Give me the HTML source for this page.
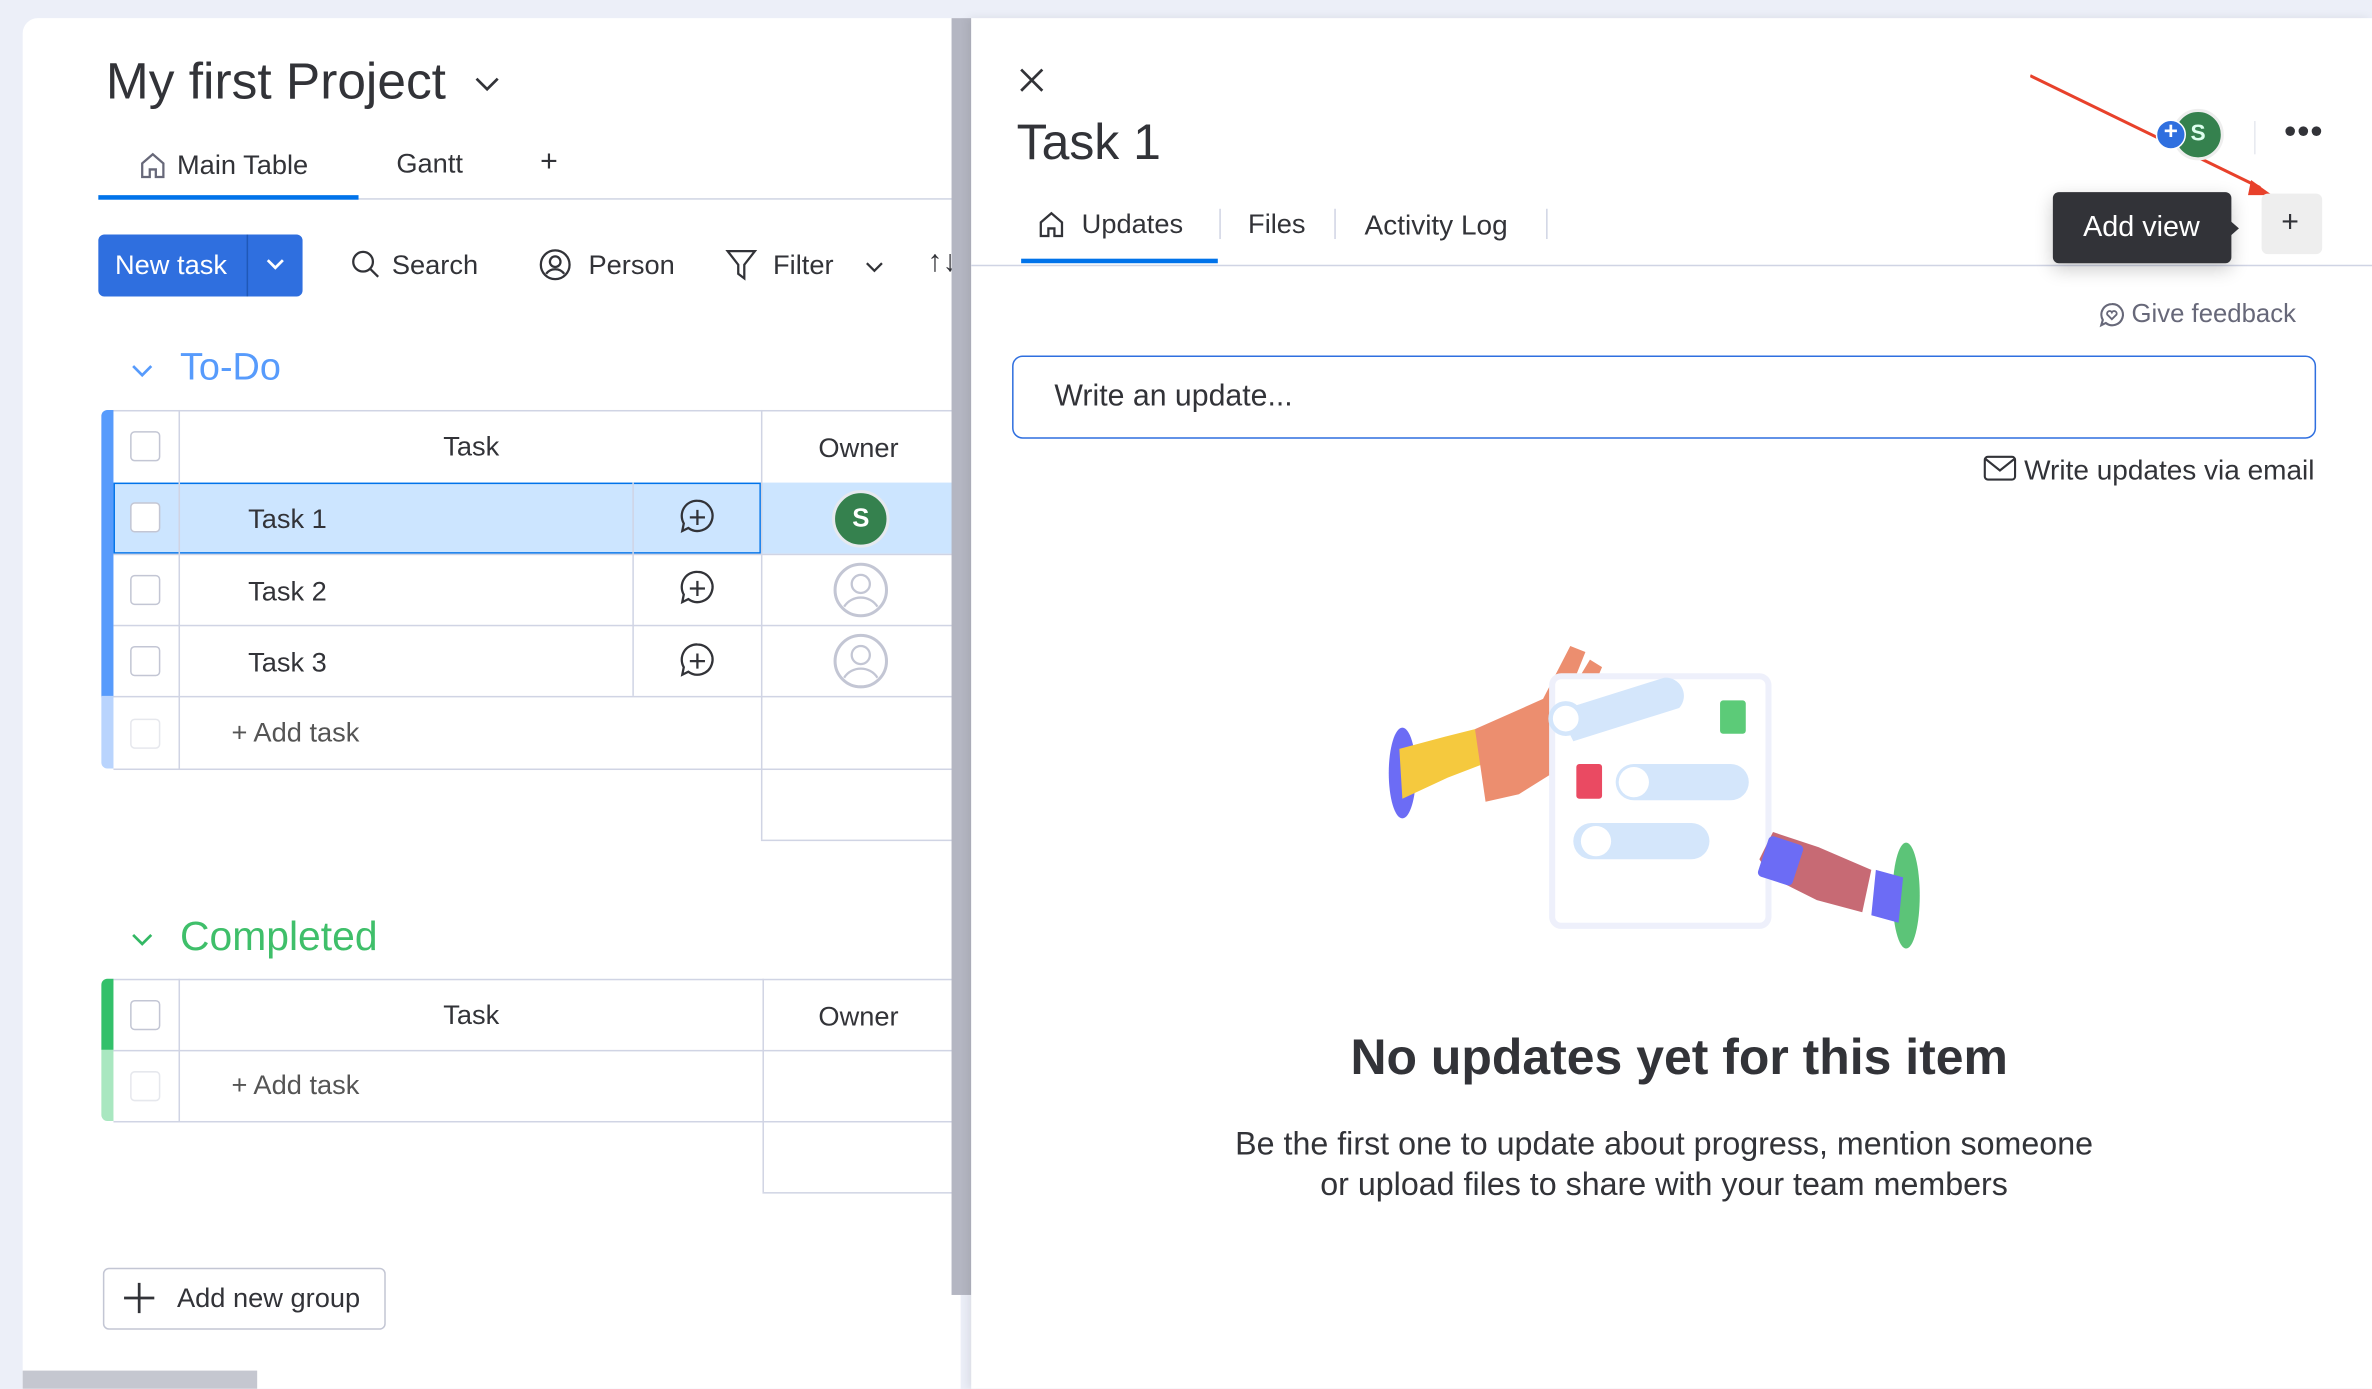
<!DOCTYPE html>
<html><head><meta charset="utf-8"><style>
*{box-sizing:border-box;margin:0;padding:0}
html,body{width:2372px;height:1388px;overflow:hidden;background:#eceff8}
#s{position:absolute;left:0;top:0;width:1568px;height:918px;transform:scale(1.5128);transform-origin:0 0;font-family:"Liberation Sans",sans-serif;color:#323338}
.a{position:absolute}
.t{position:absolute;white-space:nowrap}
.cb{position:absolute;width:20px;height:20px;border:1px solid #c3c6d4;border-radius:3px;background:#fff}
.hl{position:absolute;height:1px;background:#d0d4e4}
.vl{position:absolute;width:1px;background:#d0d4e4}
</style></head><body><div id="s">
<div class="a" style="left:15px;top:12px;width:620px;height:906px;background:#fff;border-radius:10px 0 0 0"></div>
<div class="a" style="left:15px;top:906px;width:155px;height:12px;background:#c5c7d0"></div>
<div class="t" style="left:70px;top:35px;font-size:34px;color:#323338">My first Project</div>
<svg class="a" style="left:313px;top:50px" width="18" height="12"><path d="M2 2l7 7 7-7" stroke="#323338" stroke-width="1.8" fill="none"/></svg>
<svg class="a" style="left:92px;top:100px" width="18" height="18"><path d="M2 8l7-6 7 6v9h-5v-5h-4v5H2z" stroke="#676879" stroke-width="1.5" fill="none"/></svg>
<div class="t" style="left:117px;top:99px;font-size:18px">Main Table</div>
<div class="t" style="left:262px;top:98px;font-size:18px">Gantt</div>
<div class="t" style="left:357px;top:96px;font-size:20px">+</div>
<div class="hl" style="left:65px;top:131px;width:565px;background:#d0d4e4"></div>
<div class="a" style="left:65px;top:129px;width:172px;height:3px;background:#0073ea"></div>
<div class="a" style="left:65px;top:155px;width:135px;height:41px;background:#2f6fdf;border-radius:4px"></div>
<div class="a" style="left:163px;top:155px;width:1px;height:41px;background:#1f58b8"></div>
<div class="t" style="left:76px;top:165px;font-size:18px;color:#fff">New task</div>
<svg class="a" style="left:175px;top:170px" width="14" height="10"><path d="M2 2l5 5 5-5" stroke="#fff" stroke-width="1.8" fill="none"/></svg>
<svg class="a" style="left:232px;top:165px" width="20" height="20"><circle cx="8" cy="8" r="6.5" stroke="#323338" stroke-width="1.5" fill="none"/><path d="M13 13l5 5" stroke="#323338" stroke-width="1.5"/></svg>
<div class="t" style="left:259px;top:165px;font-size:18px">Search</div>
<svg class="a" style="left:356px;top:164px" width="22" height="22"><circle cx="11" cy="11" r="9.5" stroke="#323338" stroke-width="1.5" fill="none"/><circle cx="11" cy="9" r="3.5" stroke="#323338" stroke-width="1.5" fill="none"/><path d="M5 17c3-4 9-4 12 0" stroke="#323338" stroke-width="1.5" fill="none"/></svg>
<div class="t" style="left:389px;top:165px;font-size:18px">Person</div>
<svg class="a" style="left:479px;top:164px" width="22" height="22"><path d="M2 2h18l-7 9v9l-4-3v-6z" stroke="#323338" stroke-width="1.5" fill="none"/></svg>
<div class="t" style="left:511px;top:165px;font-size:18px">Filter</div>
<svg class="a" style="left:571px;top:172px" width="14" height="10"><path d="M2 2l5 5 5-5" stroke="#323338" stroke-width="1.5" fill="none"/></svg>
<div class="t" style="left:613px;top:162px;font-size:20px">↑↓</div>
<svg class="a" style="left:86px;top:240px" width="16" height="10"><path d="M2 2l6 6 6-6" stroke="#579bfc" stroke-width="1.8" fill="none"/></svg>
<div class="t" style="left:119px;top:229px;font-size:25px;color:#579bfc">To-Do</div>
<div class="a" style="left:67px;top:271px;width:8px;height:190px;background:#579bfc;border-radius:4px 0 0 0"></div>
<div class="a" style="left:67px;top:460px;width:8px;height:48px;background:#b9d4fd;border-radius:0 0 0 4px"></div>
<div class="a" style="left:75px;top:319px;width:428px;height:47px;background:#cce5ff;border:1.5px solid #0073ea"></div>
<div class="a" style="left:503px;top:319px;width:127px;height:47px;background:#cce5ff"></div>
<div class="hl" style="left:75px;top:271px;width:555px"></div>
<div class="hl" style="left:75px;top:366px;width:555px"></div>
<div class="hl" style="left:75px;top:413px;width:555px"></div>
<div class="hl" style="left:75px;top:460px;width:555px"></div>
<div class="hl" style="left:75px;top:508px;width:555px"></div>
<div class="vl" style="left:118px;top:271px;height:237px"></div>
<div class="vl" style="left:503px;top:271px;height:284px"></div>
<div class="vl" style="left:418px;top:319px;height:141px"></div>
<div class="hl" style="left:503px;top:555px;width:127px"></div>
<div class="cb" style="left:86px;top:285px"></div><div class="cb" style="left:86px;top:332px"></div><div class="cb" style="left:86px;top:380px"></div><div class="cb" style="left:86px;top:427px"></div><div class="cb" style="left:86px;top:475px;opacity:.4"></div>
<div class="t" style="left:293px;top:285px;font-size:18px">Task</div>
<div class="t" style="left:541px;top:286px;font-size:18px">Owner</div>
<div class="t" style="left:164px;top:333px;font-size:18px">Task 1</div>
<div class="t" style="left:164px;top:381px;font-size:18px">Task 2</div>
<div class="t" style="left:164px;top:428px;font-size:18px">Task 3</div>
<div class="t" style="left:153px;top:474px;font-size:18px;color:#555">+ Add task</div>
<svg class="a" style="left:448px;top:329px" width="26" height="26"><path d="M13 2a10 10 0 1 1-6 18l-4 2 1-5A10 10 0 0 1 13 2z" stroke="#323338" stroke-width="1.5" fill="none"/><path d="M13 8v10M8 13h10" stroke="#323338" stroke-width="1.5"/></svg>
<svg class="a" style="left:448px;top:376px" width="26" height="26"><path d="M13 2a10 10 0 1 1-6 18l-4 2 1-5A10 10 0 0 1 13 2z" stroke="#323338" stroke-width="1.5" fill="none"/><path d="M13 8v10M8 13h10" stroke="#323338" stroke-width="1.5"/></svg>
<svg class="a" style="left:448px;top:424px" width="26" height="26"><path d="M13 2a10 10 0 1 1-6 18l-4 2 1-5A10 10 0 0 1 13 2z" stroke="#323338" stroke-width="1.5" fill="none"/><path d="M13 8v10M8 13h10" stroke="#323338" stroke-width="1.5"/></svg>
<div class="a" style="left:550px;top:324px;width:38px;height:38px;border-radius:50%;background:#35814e;border:2px solid #e6e9ef;color:#fff;font-weight:bold;font-size:17px;text-align:center;line-height:34px">S</div>
<svg class="a" style="left:550px;top:371px" width="38" height="38"><circle cx="19" cy="19" r="17" stroke="#c3c6d4" stroke-width="2" fill="#fff"/><circle cx="19" cy="15" r="6" stroke="#c3c6d4" stroke-width="1.5" fill="none"/><path d="M8 30c5-8 17-8 22 0" stroke="#c3c6d4" stroke-width="1.5" fill="none"/></svg>
<svg class="a" style="left:550px;top:418px" width="38" height="38"><circle cx="19" cy="19" r="17" stroke="#c3c6d4" stroke-width="2" fill="#fff"/><circle cx="19" cy="15" r="6" stroke="#c3c6d4" stroke-width="1.5" fill="none"/><path d="M8 30c5-8 17-8 22 0" stroke="#c3c6d4" stroke-width="1.5" fill="none"/></svg>
<svg class="a" style="left:86px;top:616px" width="16" height="10"><path d="M2 2l6 6 6-6" stroke="#33b864" stroke-width="1.8" fill="none"/></svg>
<div class="t" style="left:119px;top:604px;font-size:27px;color:#3fbf6a">Completed</div>
<div class="a" style="left:67px;top:647px;width:8px;height:47px;background:#33c06a;border-radius:4px 0 0 0"></div>
<div class="a" style="left:67px;top:694px;width:8px;height:47px;background:#a9e7c0;border-radius:0 0 0 4px"></div>
<div class="hl" style="left:75px;top:647px;width:555px"></div>
<div class="hl" style="left:75px;top:694px;width:555px"></div>
<div class="hl" style="left:75px;top:741px;width:555px"></div>
<div class="vl" style="left:118px;top:647px;height:94px"></div>
<div class="vl" style="left:504px;top:647px;height:141px"></div>
<div class="hl" style="left:504px;top:788px;width:126px"></div>
<div class="cb" style="left:86px;top:661px"></div><div class="cb" style="left:86px;top:708px;opacity:.4"></div>
<div class="t" style="left:293px;top:661px;font-size:18px">Task</div>
<div class="t" style="left:541px;top:662px;font-size:18px">Owner</div>
<div class="t" style="left:153px;top:707px;font-size:18px;color:#555">+ Add task</div>
<div class="a" style="left:68px;top:838px;width:187px;height:41px;border:1px solid #c3c6d4;border-radius:4px"></div>
<svg class="a" style="left:81px;top:847px" width="22" height="22"><path d="M11 1v20M1 11h20" stroke="#323338" stroke-width="1.8"/></svg>
<div class="t" style="left:117px;top:848px;font-size:18px">Add new group</div>
<div class="a" style="left:629px;top:12px;width:13px;height:844px;background:#b4b6c2"></div>
<div class="a" style="left:642px;top:12px;width:926px;height:906px;background:#fff;box-shadow:-2px 0 6px rgba(0,0,0,.08)"></div>
<svg class="a" style="left:673px;top:44px" width="18" height="18"><path d="M2 2l14 14M16 2L2 16" stroke="#323338" stroke-width="1.8"/></svg>
<div class="t" style="left:672px;top:75px;font-size:33px">Task 1</div>
<svg class="a" style="left:1342px;top:49px" width="162" height="82"><path d="M0 1L152 75" stroke="#e8412b" stroke-width="2"/><path d="M146 70l14 10-16 0z" fill="#e8412b"/></svg>
<div class="a" style="left:1436px;top:72px;width:34px;height:34px;border-radius:50%;background:#35814e;border:2px solid #eee;color:#dfe;font-weight:bold;font-size:15px;text-align:center;line-height:30px">S</div>
<div class="a" style="left:1425px;top:79px;width:20px;height:20px;border-radius:50%;background:#2f6fdf;border:1.5px solid #fff;color:#fff;font-weight:bold;font-size:16px;text-align:center;line-height:16px">+</div>
<div class="vl" style="left:1490px;top:80px;height:22px;background:#e6e9ef"></div>
<div class="t" style="left:1510px;top:74px;font-size:22px;font-weight:bold;letter-spacing:1px">•••</div>
<svg class="a" style="left:686px;top:139px" width="18" height="18"><path d="M2 8l7-6 7 6v9h-5v-5h-4v5H2z" stroke="#323338" stroke-width="1.5" fill="none"/></svg>
<div class="t" style="left:715px;top:138px;font-size:18px">Updates</div>
<div class="t" style="left:825px;top:138px;font-size:18px">Files</div>
<div class="t" style="left:902px;top:138px;font-size:18.5px">Activity Log</div>
<div class="vl" style="left:806px;top:138px;height:20px"></div><div class="vl" style="left:882px;top:138px;height:20px"></div><div class="vl" style="left:1022px;top:138px;height:20px"></div>
<div class="hl" style="left:642px;top:175px;width:926px;background:#d0d4e4"></div>
<div class="a" style="left:675px;top:171px;width:130px;height:3px;background:#0073ea"></div>
<div class="a" style="left:1357px;top:127px;width:118px;height:47px;background:#323338;border-radius:4px;box-shadow:0 4px 12px rgba(0,0,0,.2)"></div>
<div class="a" style="left:1472px;top:144px;width:0;height:0;border-top:7px solid transparent;border-bottom:7px solid transparent;border-left:8px solid #323338"></div>
<div class="t" style="left:1377px;top:140px;font-size:19px;color:#fff">Add view</div>
<div class="a" style="left:1495px;top:128px;width:40px;height:40px;background:#eeeeee;border-radius:4px"></div>
<div class="t" style="left:1508px;top:136px;font-size:20px">+</div>
<svg class="a" style="left:1387px;top:199px" width="18" height="18"><path d="M9 2a7 7 0 1 1-4 12.5L2 16l1-3.5A7 7 0 0 1 9 2z" stroke="#676879" stroke-width="1.4" fill="none"/><path d="M9 12l-3-3a1.6 1.6 0 0 1 3-1.5 1.6 1.6 0 0 1 3 1.5z" stroke="#676879" stroke-width="1.2" fill="none"/></svg>
<div class="t" style="left:1409px;top:198px;font-size:17px;color:#676879">Give feedback</div>
<div class="a" style="left:669px;top:235px;width:862px;height:55px;border:1.5px solid #2f6fdf;border-radius:7px"></div>
<div class="t" style="left:697px;top:251px;font-size:20px">Write an update...</div>
<svg class="a" style="left:1311px;top:301px" width="22" height="18"><rect x="1" y="1" width="20" height="15" rx="2" stroke="#323338" stroke-width="1.4" fill="none"/><path d="M1 2l10 8 10-8" stroke="#323338" stroke-width="1.4" fill="none"/></svg>
<div class="t" style="left:1338px;top:300px;font-size:18.5px">Write updates via email</div>
<svg class="a" style="left:910px;top:425px" width="370" height="210">
<ellipse cx="17" cy="86" rx="9" ry="30" fill="#6c6cf5"/>
<path d="M15 70l30-8 20-5 8 22-26 10-30 14z" fill="#f5c93e"/>
<path d="M65 57l45-20 18-35 10 4-12 30 15-25 8 5-15 35 30-8 5 12-35 20-40 25-22 5z" fill="#ec8e6f"/>
<rect x="116" y="22" width="143" height="165" rx="6" fill="#fff" stroke="#eef0fb" stroke-width="4"/>
<path d="M120 45l70-22a12 12 0 0 1 10 20l-70 22z" fill="#d4e6fb"/>
<circle cx="125" cy="50" r="10" fill="#fff" stroke="#d4e6fb" stroke-width="3"/>
<rect x="227" y="38" width="17" height="22" rx="2" fill="#5ccb78"/>
<rect x="132" y="80" width="17" height="23" rx="2" fill="#ea4a62"/>
<rect x="158" y="80" width="88" height="24" rx="12" fill="#d4e6fb"/><circle cx="170" cy="92" r="10" fill="#fff"/>
<rect x="130" y="119" width="90" height="24" rx="12" fill="#d4e6fb"/><circle cx="145" cy="131" r="10" fill="#fff"/>
<path d="M262 125l30 10 35 15-6 28-30-8-30-15-8-12z" fill="#c76a74"/>
<rect x="255" y="130" width="24" height="28" rx="3" fill="#6c6cf5" transform="rotate(18 267 144)"/>
<ellipse cx="350" cy="167" rx="9" ry="35" fill="#5cc478"/>
<path d="M330 150l18 5-3 30-18-5z" fill="#6c6cf5"/>
</svg>
<div class="t" style="left:1110px;top:680px;transform:translateX(-50%);font-size:33px;font-weight:bold;color:#323338">No updates yet for this item</div>
<div class="t" style="left:1100px;top:743px;transform:translateX(-50%);font-size:21.3px;text-align:center;line-height:27px">Be the first one to update about progress, mention someone<br>or upload files to share with your team members</div>
</div></body></html>
